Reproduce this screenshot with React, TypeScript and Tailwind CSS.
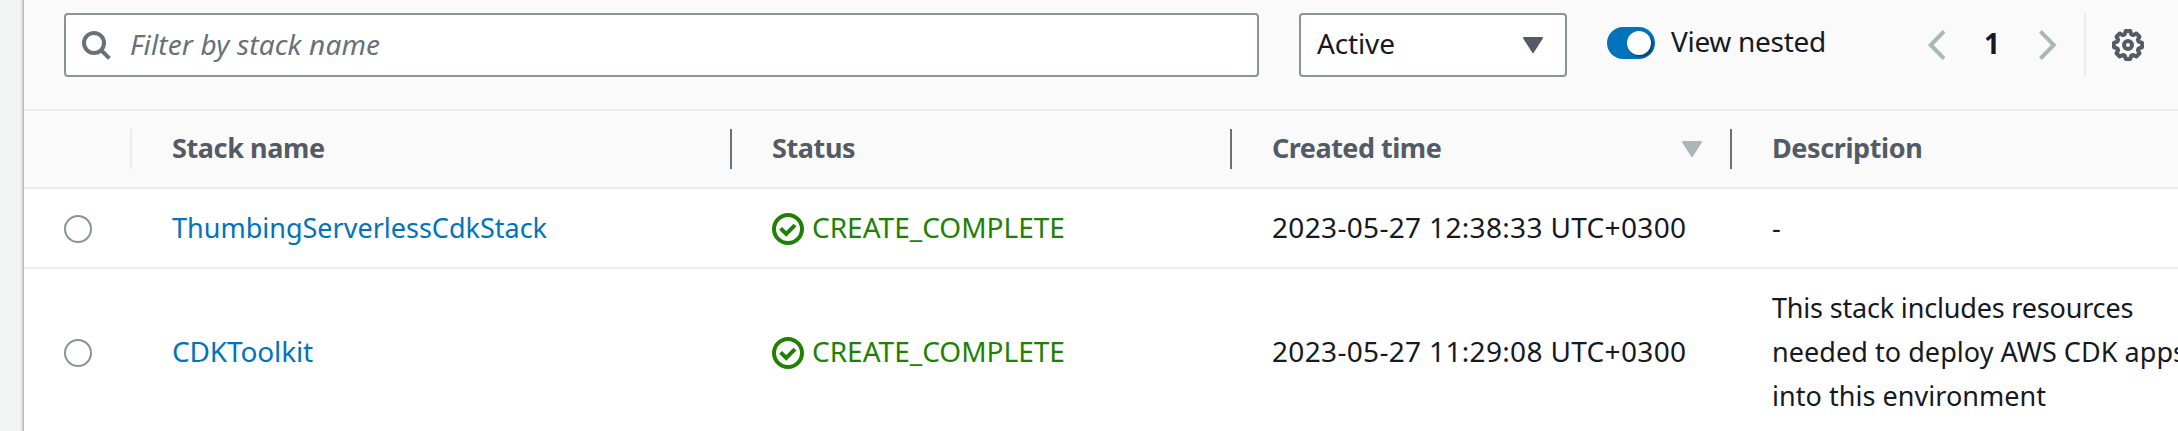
import React from "react";

type Stack = {
  name: string;
  nameClass: string;
  created: string;
  description: { text: string; className: string }[];
};

const stacks: Stack[] = [
  {
    name: "ThumbingServerlessCdkStack",
    nameClass: "mt-px -mb-px text-[27px] leading-[44px]",
    created: "2023-05-27 12:38:33 UTC+0300",
    description: [{ text: "-", className: "" }],
  },
  {
    name: "CDKToolkit",
    nameClass: "tracking-[-0.15px]",
    created: "2023-05-27 11:29:08 UTC+0300",
    description: [
      { text: "This stack includes resources", className: "tracking-[-0.18px]" },
      { text: "needed to deploy AWS CDK apps", className: "tracking-[0.05px]" },
      { text: "into this environment", className: "tracking-[0.04px]" },
    ],
  },
];

function SearchIcon() {
  return (
    <svg className="h-8 w-8 shrink-0" viewBox="0 0 32 32" fill="none" stroke="#687078" strokeWidth="4">
      <circle cx="12" cy="14" r="10" />
      <path d="M19 21l8.4 8.4" />
    </svg>
  );
}

function Caret({ className }: { className: string }) {
  return (
    <svg className={`h-4 w-5 shrink-0 ${className}`} viewBox="0 0 20 16" fill="currentColor" stroke="currentColor" strokeWidth="2" strokeLinejoin="round">
      <path d="M1 1h18l-9 14z" />
    </svg>
  );
}

function Chevron({ d }: { d: string }) {
  return (
    <svg className="h-8 w-8 shrink-0" viewBox="0 0 32 32" fill="none" stroke="#aab7b8" strokeWidth="4">
      <path d={d} />
    </svg>
  );
}

function GearIcon() {
  return (
    <svg className="h-8 w-8 shrink-0" viewBox="0 0 32 32" fill="none" stroke="#545b64" strokeWidth="4" strokeLinejoin="round">
      <path d="M13.7 2h4.6l1 3.3 2 .8 3-1.6 3.2 3.2-1.6 3 .8 2 3.3 1v4.6l-3.3 1-.8 2 1.6 3-3.2 3.2-3-1.6-2 .8-1 3.3h-4.6l-1-3.3-2-.8-3 1.6-3.2-3.2 1.6-3-.8-2-3.3-1v-4.6l3.3-1 .8-2-1.6-3 3.2-3.2 3 1.6 2-.8z" />
      <circle cx="16" cy="16" r="4" />
    </svg>
  );
}

function CheckIcon() {
  return (
    <svg className="mt-1 h-8 w-8 shrink-0" viewBox="0 0 32 32" fill="none" stroke="#1d8102" strokeWidth="4">
      <circle cx="16" cy="16" r="14" />
      <path d="M8.6 15.4l5.6 5.6 8.8-8.8" />
    </svg>
  );
}

function HeaderCell({ title, className, divider, sorted }: { title?: string; className: string; divider?: string; sorted?: boolean }) {
  return (
    <div className="flex items-start">
      <span className={`mt-px ml-10 flex-1 whitespace-nowrap ${className}`}>{title}</span>
      {sorted && <Caret className="mt-4 mr-7 text-[#aab7b8]" />}
      {divider && <span className={`mt-1 h-10 w-0.5 ${divider}`} />}
    </div>
  );
}

const columns = "grid grid-cols-[108px_600px_500px_500px_446px]";

export default function App() {
  return (
    <div className="flex h-[431px] w-full overflow-hidden bg-[#f2f3f3] font-['Noto_Sans','Open_Sans',sans-serif] text-[28px] leading-[44px] text-[#16191f]">
      <div className="w-6 shrink-0 bg-[linear-gradient(to_right,#f2f3f3_0_20px,#eceded_20px_21px,#e4e6e6_21px_22px,#d3d6d6_22px_23px,#b4b9b9_23px_24px)]" />
      <main className="w-[2154px] shrink-0 bg-white">
        <div className="flex h-[111px] items-start border-b-2 border-[#eaeded] bg-[#fafafa] pt-[13px] pl-10">
          <div className="flex h-16 w-[1195px] items-center rounded-[4px] border-2 border-[#879596] bg-white pl-4">
            <SearchIcon />
            <span className="mb-0.5 ml-4 tracking-[0.15px] whitespace-nowrap text-[#687078] italic">Filter by stack name</span>
          </div>
          <div className="ml-10 flex h-16 w-[268px] items-center justify-between rounded-[4px] border-2 border-[#879596] bg-white pr-[22px] pl-4">
            <span className="mb-1 tracking-[-0.15px]">Active</span>
            <Caret className="text-[#545b64]" />
          </div>
          <div className="mt-1.5 ml-10 flex items-start">
            <div className="mt-2 flex h-8 w-12 justify-end rounded-full bg-[#0073bb] p-1">
              <span className="h-6 w-6 rounded-full bg-white shadow-[2px_2px_2px_rgba(0,28,36,0.5)]" />
            </div>
            <span className="ml-4 w-[154px] tracking-[-0.3px] whitespace-nowrap">View nested</span>
          </div>
          <div className="ml-[99px] flex h-16 items-center">
            <Chevron d="M20 2.4L6.8 16L20 29.6" />
            <span className="mb-1 w-20 pl-[28px] font-bold">1</span>
            <Chevron d="M4.4 2.4L17.8 16L4.4 29.6" />
          </div>
          <div className="ml-4 flex h-16 items-center border-l-2 border-[#eaeded] pl-[26px]">
            <GearIcon />
          </div>
        </div>

        <div className={`${columns} h-[78px] border-b-2 border-[#eaeded] bg-[#fafafa] pt-[14px] text-[27px] leading-[44px] font-bold text-[#545b64]`}>
          <HeaderCell className="" divider="bg-[#eaeded]" />
          <HeaderCell title="Stack name" className="tracking-[-0.39px]" divider="bg-[#687078]" />
          <HeaderCell title="Status" className="tracking-[-0.4px]" divider="bg-[#687078]" />
          <HeaderCell title="Created time" className="tracking-[-0.5px]" divider="bg-[#687078]" sorted />
          <HeaderCell title="Description" className="tracking-[-0.4px]" />
        </div>

        {stacks.map((stack) => (
          <div key={stack.name} className={`${columns} items-center border-b-2 border-[#eaeded] pt-4 pb-[18px]`}>
            <span className="mt-1 ml-10 h-7 w-7 rounded-full border-2 border-[#879596] bg-white" />
            <span className={`pl-10 text-[#0073bb] ${stack.nameClass}`}>{stack.name}</span>
            <span className="flex items-center pl-10 text-[#1d8102]">
              <CheckIcon />
              <span className="ml-2">CREATE_COMPLETE</span>
            </span>
            <span className="pl-10 tracking-[0.33px] whitespace-nowrap">{stack.created}</span>
            <div className="mt-px -mb-px pl-10 text-[27px] leading-[44px] whitespace-nowrap">
              {stack.description.map((line) => (
                <div key={line.text} className={line.className}>{line.text}</div>
              ))}
            </div>
          </div>
        ))}
      </main>
    </div>
  );
}
